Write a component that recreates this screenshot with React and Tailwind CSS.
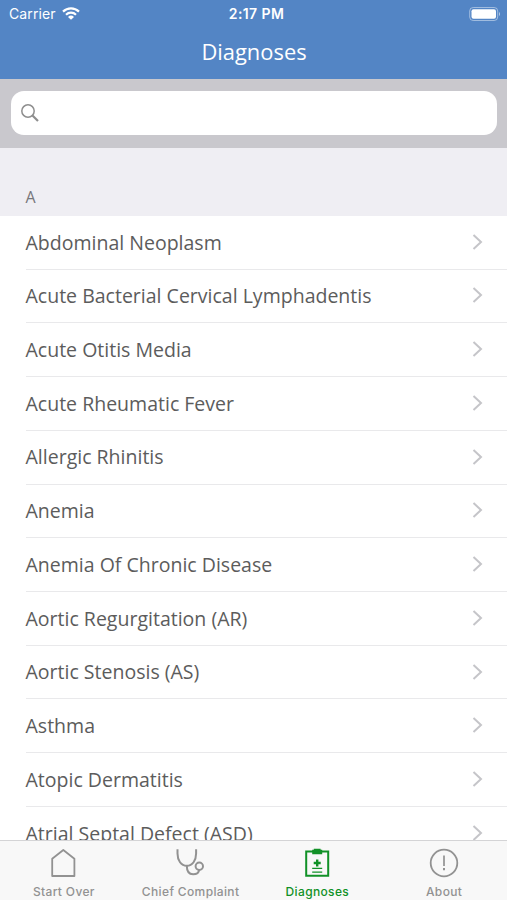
import { useState } from "react";

const diagnoses = [
  "Abdominal Neoplasm",
  "Acute Bacterial Cervical Lymphadentis",
  "Acute Otitis Media",
  "Acute Rheumatic Fever",
  "Allergic Rhinitis",
  "Anemia",
  "Anemia Of Chronic Disease",
  "Aortic Regurgitation (AR)",
  "Aortic Stenosis (AS)",
  "Asthma",
  "Atopic Dermatitis",
  "Atrial Septal Defect (ASD)",
];

const HomeIcon = () => (
  <svg width="30" height="30" viewBox="0 0 30 30" fill="none" stroke="currentColor" strokeWidth="1.8">
    <path d="M4.2 10.7 15.3 2l11.1 8.700V28H4.200z" strokeLinejoin="round" />
  </svg>
);

const StethoscopeIcon = () => (
  <svg width="30" height="30" viewBox="0 0 30 30" fill="none" stroke="currentColor" strokeWidth="2">
    <path d="M2.500 1.200v4.300c0 7 3.600 12.300 9.300 12.300s9.300-5.300 9.300-12.300V1.200" />
    <path d="M11.800 17.800c0 5.500 2.400 8.500 6.300 8.500 3.500 0 5.800-2 6-4.500" />
    <circle cx="24.300" cy="18.300" r="3.700" />
  </svg>
);

const ClipboardIcon = () => (
  <svg width="30" height="30" viewBox="0 0 30 30" fill="none" stroke="currentColor">
    <path d="M4.200 3.500h22v24.300h-22z" strokeWidth="2" />
    <path d="M10.200 1.800h1.600V.8h6.800v1h1.600v4.400h-10z" fill="currentColor" stroke="none" />
    <path d="M15.200 11.500v7M11.700 15h7" strokeWidth="2.400" />
    <path d="M10.200 20.400h10M10.200 24.200h10" strokeWidth="1.200" />
  </svg>
);

const AboutIcon = () => (
  <svg width="30" height="30" viewBox="0 0 30 30" fill="none" stroke="currentColor">
    <circle cx="15" cy="15" r="13.300" strokeWidth="1.800" />
    <path d="M15 7.500v10.500" strokeWidth="1.700" />
    <path d="M15 20v2.200" strokeWidth="2" />
  </svg>
);

const tabs = [
  { name: "Start Over", Icon: HomeIcon },
  { name: "Chief Complaint", Icon: StethoscopeIcon },
  { name: "Diagnoses", Icon: ClipboardIcon },
  { name: "About", Icon: AboutIcon },
];

const StatusBar = () => (
  <div className="grid h-[27px] grid-cols-[1fr_auto_1fr] items-center pl-[9px] pr-[6px] text-white font-[Inter,sans-serif]">
    <div className="flex items-center gap-[6px] text-[14px]">
      <span className="tracking-[0.1px]">Carrier</span>
      <svg width="18" height="13" viewBox="0 0 18 13" fill="none" stroke="currentColor" strokeWidth="2.200">
        <path d="M1 4.600a11.600 11.600 0 0 1 16 0" />
        <path d="M4 7.700a7.200 7.200 0 0 1 10 0" />
        <path d="M9 12.800 6 9.900a4.400 4.400 0 0 1 6 0z" fill="currentColor" stroke="none" />
      </svg>
    </div>
    <span className="pl-[3px] text-center text-[14px] font-semibold tracking-[0.4px]">2:17 PM</span>
    <svg className="justify-self-end" width="32" height="14" viewBox="0 0 32 14" fill="none">
      <rect x="0.700" y="0.500" width="28" height="13" rx="3.500" stroke="white" strokeOpacity="0.450" />
      <rect x="2.500" y="2.200" width="24.500" height="9.600" rx="2" fill="white" />
      <path d="M30 5c1.300.5 1.300 3.500 0 4z" fill="white" fillOpacity="0.600" />
    </svg>
  </div>
);

const DiagnosisRow = ({ name }) => (
  <li className="flex h-[53.730px] shrink-0 pl-[25.5px]">
    <div className="flex flex-1 items-center justify-between border-b border-[#e9e9eb] pr-6">
      <span className="text-[19.530px] text-[#5c5c5c]">{name}</span>
      <svg className="-mt-px" width="11" height="16" viewBox="0 0 11 16" fill="none" stroke="#c5c5c9" strokeWidth="2">
        <path d="m1.500 1 7.500 7-7.500 7" />
      </svg>
    </div>
  </li>
);

const App = () => {
  const [activeTab, setActiveTab] = useState("Diagnoses");
  const [query, setQuery] = useState("");

  const results = diagnoses.filter((name) =>
    name.toLowerCase().includes(query.toLowerCase())
  );

  return (
    <div className="flex h-screen w-full flex-col overflow-hidden bg-white font-['Open_Sans',sans-serif]">
      <header className="h-[79px] shrink-0 bg-[#5385c5]">
        <StatusBar />
        <h1 className="pl-px text-center text-[21.900px] leading-[49px] text-white">Diagnoses</h1>
      </header>

      <div className="h-[69px] shrink-0 bg-[#c9c8cd] pl-[10.5px] pr-[10px] pt-3">
        <label className="flex h-[44px] items-center gap-2 rounded-[13px] bg-white px-[10px]">
          <svg width="18" height="18" viewBox="0 0 18 18" fill="none" stroke="#8e8e8e">
            <circle cx="7" cy="7" r="6.200" strokeWidth="1.500" />
            <path d="m11.500 11.500 5.500 5.500" strokeWidth="2.200" />
          </svg>
          <input
            value={query}
            onChange={(e) => setQuery(e.target.value)}
            className="flex-1 text-[19px] text-[#565656] outline-none"
          />
        </label>
      </div>

      <main className="flex min-h-0 flex-1 flex-col overflow-hidden">
        <h2 className="h-[68px] shrink-0 bg-[#efeef3] pl-[25.5px] pt-[38px] text-[16px] leading-[23px] text-[#77777b]">
          A
        </h2>
        <ul className="-mt-[0.1px] flex flex-col">
          {results.map((name) => (
            <DiagnosisRow key={name} name={name} />
          ))}
        </ul>
      </main>

      <nav className="grid h-[60px] shrink-0 grid-cols-4 border-t border-[#d4d4d6] bg-[#f8f8f8] font-[Inter,sans-serif]">
        {tabs.map(({ name, Icon }) => (
          <button
            key={name}
            onClick={() => setActiveTab(name)}
            className={`flex flex-col items-center pt-[7px] text-[12px] font-medium leading-[14px] tracking-[0.360px] ${
              activeTab === name ? "text-[#119127]" : "text-[#929292]"
            }`}
          >
            <Icon />
            <span className="mt-[7px] pl-px">{name}</span>
          </button>
        ))}
      </nav>
    </div>
  );
};

export default App;
